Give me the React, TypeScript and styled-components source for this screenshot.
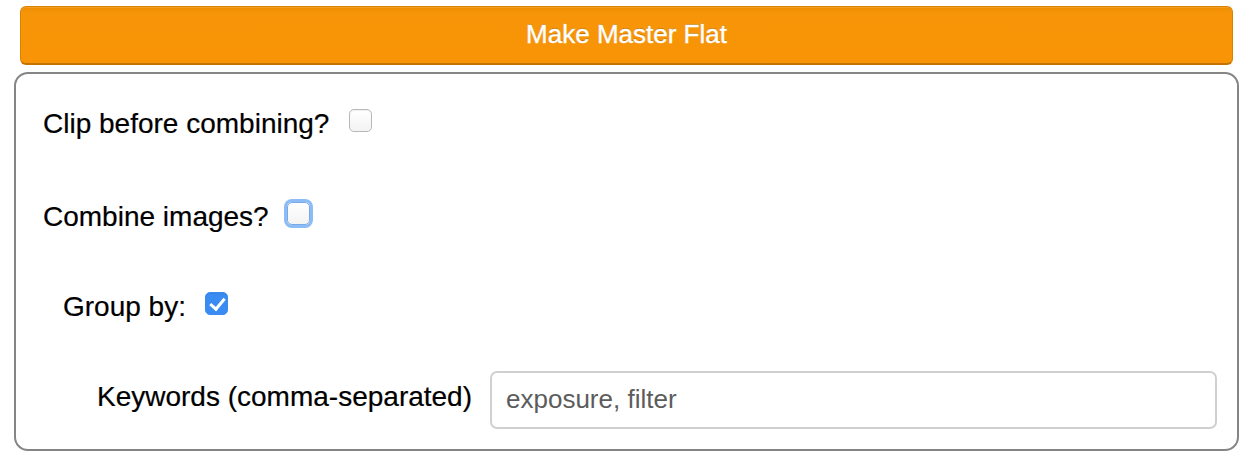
import React from "react";
import styled, { createGlobalStyle, css } from "styled-components";

const Global = createGlobalStyle`
  html, body { margin: 0; padding: 0; background: #ffffff; }
  body { font-family: "Liberation Sans", Arial, Helvetica, sans-serif; color: #000; }
`;

const Page = styled.div`
  width: 1252px;
  height: 458px;
  padding: 6px 0 0 0;
  box-sizing: border-box;
  display: flex;
  flex-direction: column;
`;

const ActionButton = styled.button`
  margin: 0 19px 0 20px;
  height: 59px;
  box-sizing: border-box;
  border: 1px solid #d88200;
  border-bottom: 2px solid #c47300;
  border-radius: 6px;
  background: linear-gradient(#ee8c00 0px, #f79508 6px, #f89406 100%);
  box-shadow: inset 0 1px 0 rgba(255, 255, 255, 0.15);
  color: #ffffff;
  font-family: "Liberation Sans", Arial, sans-serif;
  font-size: 26px;
  -webkit-text-stroke: 0.4px #ffffff;
  text-shadow: 0 -1px 0 rgba(0, 0, 0, 0.25);
  padding: 0 0 2px 0;
  cursor: pointer;
`;

const Panel = styled.div`
  margin: 7px 13px 0 14px;
  height: 379px;
  box-sizing: border-box;
  border: 2px solid #858585;
  border-radius: 14px;
  padding: 21px 20px 20px 27px;
  display: flex;
  flex-direction: column;
`;

const Row = styled.div<{ $indent?: number; $gap?: number }>`
  display: flex;
  align-items: center;
  height: 58px;
  padding-left: ${(p) => p.$indent ?? 0}px;
  margin-top: ${(p) => p.$gap ?? 0}px;
`;

const Label = styled.label<{ $space: number; $lift?: number }>`
  font-size: 28px;
  line-height: 32px;
  margin-right: ${(p) => p.$space}px;
  margin-bottom: ${(p) => p.$lift ?? 0}px;
  white-space: nowrap;
  -webkit-text-stroke: 0.2px #000;
`;

const Check = styled.input.attrs({ type: "checkbox" })<{ $focus?: boolean }>`
  appearance: none;
  -webkit-appearance: none;
  margin: 0 0 8px 0;
  width: 23px;
  height: 23px;
  box-sizing: border-box;
  border-radius: 5px;
  border: 1px solid #b8b8b8;
  background: linear-gradient(#ffffff, #f3f3f3);
  box-shadow: inset 0 1px 1px rgba(0, 0, 0, 0.06);
  outline: none;
  position: relative;
  ${(p) =>
    p.$focus &&
    css`
      box-shadow: 0 0 0 3px #8cbcf6;
      border-color: #7aa9e6;
    `}
  &:checked {
    background: #3a8cf2;
    border-color: #3a8cf2;
  }
  &:checked::after {
    content: "";
    position: absolute;
    left: 7px;
    top: 2px;
    width: 6px;
    height: 12px;
    border: solid #ffffff;
    border-width: 0 3px 3px 0;
    transform: rotate(40deg);
  }
`;

const TextInput = styled.input`
  flex: 1;
  height: 58px;
  box-sizing: border-box;
  border: 2px solid #d0d0d0;
  border-radius: 7px;
  padding: 0 14px 2px 14px;
  font-family: "Liberation Sans", Arial, sans-serif;
  font-size: 26px;
  color: #555;
  background: #fff;
  outline: none;
  &::placeholder {
    color: #5c5c5c;
  }
`;

export default function App() {
  return (
    <>
      <Global />
      <Page>
        <ActionButton>Make Master Flat</ActionButton>
        <Panel>
          <Row>
            <Label $space={20}>Clip before combining?</Label>
            <Check defaultChecked={false} />
          </Row>
          <Row $gap={35}>
            <Label $space={18}>Combine images?</Label>
            <Check $focus defaultChecked={false} />
          </Row>
          <Row $gap={32} $indent={20}>
            <Label $space={19}>Group by:</Label>
            <Check defaultChecked />
          </Row>
          <Row $gap={35} $indent={54}>
            <Label $space={18} $lift={6}>
              Keywords (comma-separated)
            </Label>
            <TextInput placeholder="exposure, filter" />
          </Row>
        </Panel>
      </Page>
    </>
  );
}
